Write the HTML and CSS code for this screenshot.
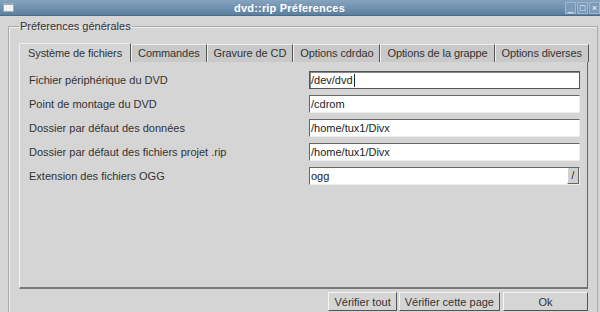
FILE: index.html
```html
<!DOCTYPE html>
<html>
  <head>
    <title>dvd::rip Préferences</title>
    <link rel="stylesheet" href="styles.css">
  </head>
  <body>

    <div class="window">

      <div class="titlebar">
        <span class="win-icon"></span>
        <span class="title">dvd::rip Préferences</span>
        <span class="controls">
          <span class="ctl">_</span>
          <span class="ctl">&#9633;</span>
          <span class="ctl">&times;</span>
        </span>
      </div>

      <fieldset class="group">
        <legend>Préferences générales</legend>

        <div class="tabs">
          <div class="tab active">Système de fichiers</div>
          <div class="tab">Commandes</div>
          <div class="tab">Gravure de CD</div>
          <div class="tab">Options cdrdao</div>
          <div class="tab">Options de la grappe</div>
          <div class="tab">Options diverses</div>
        </div>

        <div class="panel">
          <div class="row">
            <label>Fichier périphérique du DVD</label>
            <div class="entry focused">/dev/dvd<span class="caret"></span></div>
          </div>
          <div class="row">
            <label>Point de montage du DVD</label>
            <div class="entry">/cdrom</div>
          </div>
          <div class="row">
            <label>Dossier par défaut des données</label>
            <div class="entry">/home/tux1/Divx</div>
          </div>
          <div class="row">
            <label>Dossier par défaut des fichiers projet .rip</label>
            <div class="entry">/home/tux1/Divx</div>
          </div>
          <div class="row">
            <label>Extension des fichiers OGG</label>
            <div class="entry combo">ogg<span class="combo-btn">/</span></div>
          </div>
        </div>

        <div class="actions">
          <button class="btn">Vérifier tout</button>
          <button class="btn">Vérifier cette page</button>
          <button class="btn ok">Ok</button>
        </div>
      </fieldset>

    </div>

  </body>
</html>
```

FILE: styles.css
```css
* {
  box-sizing: border-box;
}

html, body {
  margin: 0;
  height: 100%;
}

body {
  font-family: "Liberation Sans", Arial, sans-serif;
  font-size: 11px;
  color: #333;
  background-color: #d5d5d5;
}

.window {
  width: 600px;
  height: 312px;
  overflow: hidden;
  display: flex;
  flex-direction: column;
}

/* Title bar */

.titlebar {
  height: 16px;
  flex: none;
  display: flex;
  align-items: center;
  background: linear-gradient(#86a4c0, #5c7f9f);
  border-bottom: 1px solid #4a6a88;
}

.win-icon {
  width: 11px;
  height: 9px;
  margin-left: 3px;
  background-color: #f2f2f2;
  border: 1px solid #9ab;
  border-top-width: 2px;
}

.title {
  flex: 1;
  text-align: center;
  color: #fff;
  font-weight: bold;
  font-size: 11px;
  letter-spacing: 0.2px;
}

.controls {
  display: flex;
  gap: 1px;
}

.ctl {
  width: 11px;
  height: 12px;
  line-height: 10px;
  font-size: 9px;
  text-align: center;
  color: #fff;
  background-color: #7c9bb8;
  border: 1px solid #9fb8cf;
}

/* Group frame */

.group {
  flex: 1;
  margin: 4px 2px 0 8px;
  padding: 0 9px 0 10px;
  border: 1px solid #aaa;
  border-bottom: none;
  box-shadow: inset 1px 1px 0 #eee;
  min-width: 0;
  display: flex;
  flex-direction: column;
}

.group legend {
  padding: 0 1px;
  font-size: 11px;
  line-height: 13px;
  color: #333;
}

/* Tabs */

.tabs {
  display: flex;
  margin-top: 10px;
  height: 19px;
  flex: none;
}

.tab {
  height: 18px;
  line-height: 16px;
  padding: 0 6px;
  margin-top: 1px;
  background-color: #c9c9c9;
  border-left: 1px solid #eee;
  border-right: 1px solid #555;
  border-top: 1px solid #eee;
  white-space: nowrap;
  letter-spacing: -0.1px;
}

.tab.active {
  height: 19px;
  line-height: 18px;
  margin-top: 0;
  padding: 0 8px;
  background-color: #d5d5d5;
}

/* Panel */

.panel {
  height: 227px;
  flex: none;
  padding: 9px 7px 0 9px;
  border-left: 1px solid #f4f4f4;
  border-right: 1px solid #666;
  border-bottom: 2px solid #777;
  display: flex;
  flex-direction: column;
  gap: 6px;
}

.row {
  display: flex;
  align-items: center;
  height: 18px;
}

.row label {
  width: 280px;
  flex: none;
}

.entry {
  flex: 1;
  height: 18px;
  line-height: 16px;
  padding-left: 1px;
  background-color: #fff;
  border-top: 1px solid #666;
  border-left: 1px solid #666;
  border-bottom: 1px solid #eee;
  border-right: 1px solid #eee;
  color: #222;
  display: flex;
  align-items: center;
}

.entry.focused {
  border: 1px solid #555;
  box-shadow: inset 1px 1px 0 #888;
}

.caret {
  width: 1px;
  height: 13px;
  background-color: #222;
  margin-left: 1px;
}

.entry.combo {
  justify-content: space-between;
}

.combo-btn {
  width: 12px;
  height: 16px;
  line-height: 15px;
  text-align: center;
  background-color: #d0d0d0;
  border-left: 1px solid #fff;
  border-right: 1px solid #666;
  border-bottom: 1px solid #666;
  font-size: 10px;
}

/* Buttons */

.actions {
  display: flex;
  justify-content: flex-end;
  gap: 2px;
  margin-top: 3px;
}

.btn {
  height: 19px;
  padding: 0 5px;
  font-family: "Liberation Sans", Arial, sans-serif;
  font-size: 11px;
  color: #333;
  background-color: #d5d5d5;
  border: none;
  border-top: 1px solid #f4f4f4;
  border-left: 1px solid #f4f4f4;
  border-right: 1px solid #555;
  border-bottom: 1px solid #555;
}

.btn.ok {
  width: 85px;
  margin-left: 1px;
}
```
